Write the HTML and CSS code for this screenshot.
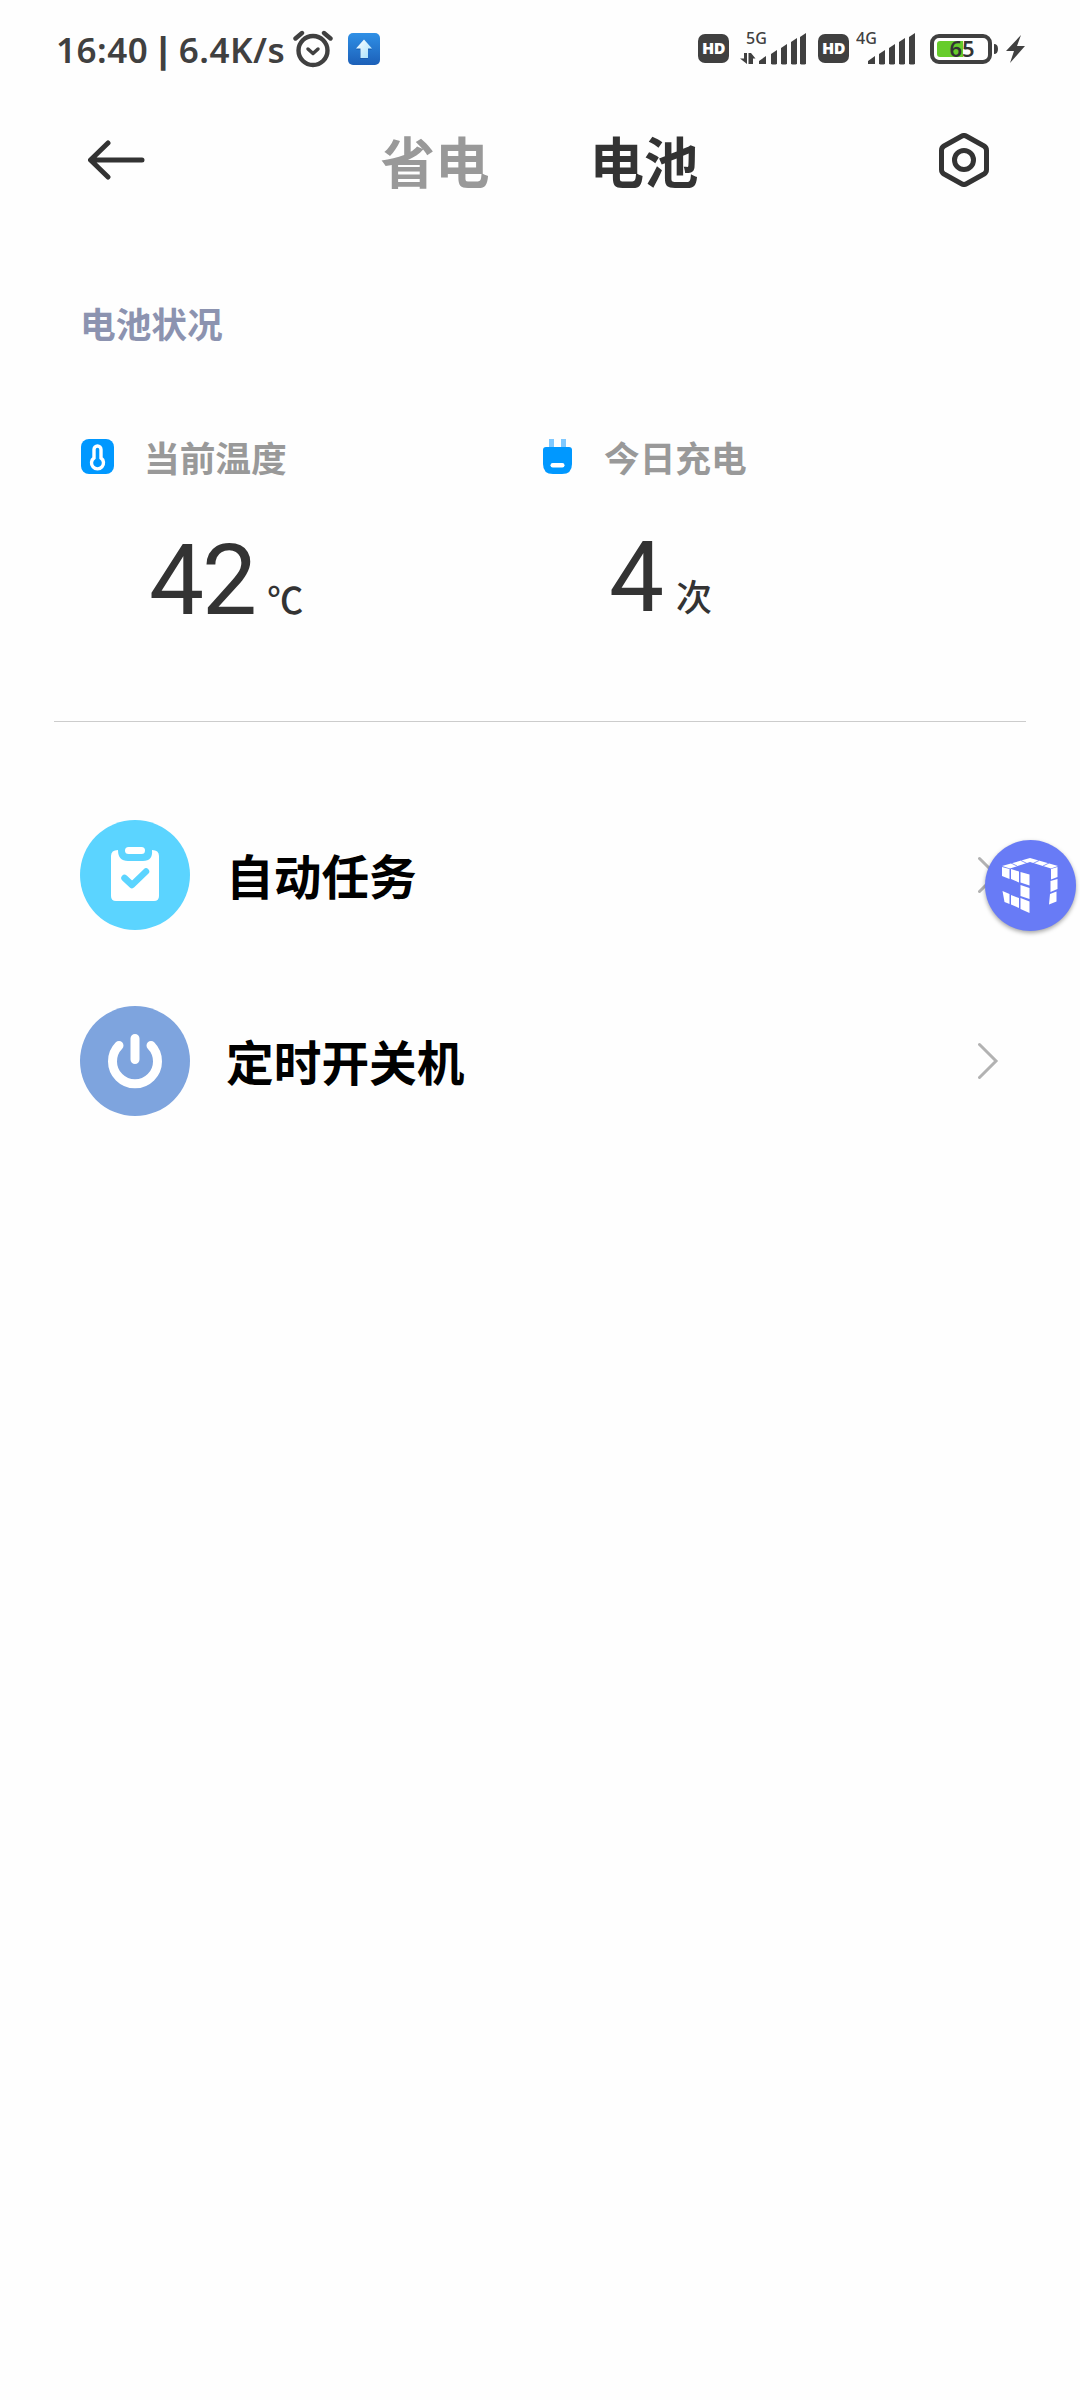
FILE: index.html
```html
<!DOCTYPE html>
<html lang="zh-CN">
<head>
    <meta charset="UTF-8">
    <meta name="viewport" content="width=device-width, initial-scale=1.0">
    <title>电池</title>
    <link rel="stylesheet" href="styles.css">
</head>
<body>
    <div class="status-bar">
        <div class="status-left">
            <span class="status-text">16:40 <b>|</b> 6.4K/s</span>
            <svg class="alarm" width="42" height="38" viewBox="0 0 42 38" fill="none" stroke="#404040" stroke-linecap="round">
                <circle cx="21" cy="20.500" r="14.500" stroke-width="4.400"/>
                <path d="M3.500 8.500L10 3M38.500 8.500L32 3" stroke-width="4.400"/>
                <path d="M16 19l5 4.500 5-4.500" stroke-width="3.500" stroke-linejoin="round"/>
            </svg>
            <svg class="upload" width="32" height="32" viewBox="0 0 32 32">
                <defs>
                    <linearGradient id="up" x1="0" y1="0" x2="0" y2="1">
                        <stop offset="0" stop-color="#2f90e6"/>
                        <stop offset="1" stop-color="#1c60b8"/>
                    </linearGradient>
                    <linearGradient id="arrow" x1="0" y1="0" x2="1" y2="1">
                        <stop offset="0" stop-color="#fff"/>
                        <stop offset="1" stop-color="#a4e0fc"/>
                    </linearGradient>
                </defs>
                <rect width="32" height="32" rx="5" fill="url(#up)"/>
                <path d="M16 8l8 9h-4v9h-8v-9H8z" fill="#174f9c" opacity=".5"/>
                <path d="M16 6.500l8 9h-4v9.500h-7.500v-9.500H8z" fill="url(#arrow)"/>
            </svg>
        </div>
        <div class="status-right">
            <span class="hd">HD</span>
            <svg class="signal" width="68" height="42" viewBox="0 -6 68 42">
                <text x="6" y="13">5G</text>
                <path d="M4 22h3v11L0 27.500h4zM8.500 33V22h2.500v11zM11 33V22l4.500 5.500H13V33z" fill="#404040"/>
                <path d="M19 33v-3l7-5v8zM31 33V23l6-4v14q-3 1-6 0zM41 33V17l6-4v20q-3 1-6 0zM51 33V11l6-4v26q-3 1-6 0zM60 33V6l6-4v31q-3 1-6 0z" fill="#404040"/>
            </svg>
            <span class="hd second">HD</span>
            <svg class="signal wide" width="60" height="42" viewBox="0 -6 60 42">
                <text x="0" y="13">4G</text>
                <path d="M12 33v-3l7-5v8zM23 33V23l6-4v14q-3 1-6 0zM33 33V17l6-4v20q-3 1-6 0zM43 33V11l6-4v26q-3 1-6 0zM53 33V6l6-4v31q-3 1-6 0z" fill="#404040"/>
            </svg>
            <svg class="battery" width="96" height="32" viewBox="0 0 96 32">
                <rect x="2" y="3" width="58" height="26" rx="7" fill="none" stroke="#404040" stroke-width="4"/>
                <path d="M10 8h23v16H10q-3 0-3-3V11q0-3 3-3z" fill="#66cc2b"/>
                <path d="M64 11q4 0 4 5t-4 5z" fill="#404040"/>
                <text x="32" y="24">65</text>
                <path d="M91 2L76 18h8l-4 12 15-17h-8z" fill="#404040"/>
            </svg>
        </div>
    </div>

    <header class="header">
        <svg class="back" width="60" height="42" viewBox="0 0 60 42" fill="none" stroke="#333" stroke-width="5" stroke-linecap="round" stroke-linejoin="round">
            <path d="M20 4L2.500 21 20 38M3 21h51"/>
        </svg>
        <nav class="tabs">
            <span class="tab">省电</span>
            <span class="tab active">电池</span>
        </nav>
        <svg class="settings" width="50" height="54" viewBox="0 0 50 54" fill="none" stroke="#333" stroke-width="5" stroke-linejoin="round">
            <path d="M22.500 3.200q2.500-1.400 5 0L45 13q2.500 1.500 2.500 4.500v19q0 3-2.500 4.500l-17.500 9.800q-2.500 1.400-5 0L5 41q-2.500-1.500-2.500-4.500v-19Q2.500 14.500 5 13z"/>
            <circle cx="25" cy="27" r="9.500"/>
        </svg>
    </header>

    <section class="condition">
        <h2 class="section-title">电池状况</h2>
        <div class="stats">
            <div class="stat">
                <div class="stat-label">
                    <svg width="34" height="36" viewBox="0 0 34 36">
                        <rect x="1" y="0" width="33" height="35" rx="8" fill="#0098ff"/>
                        <path d="M14 19V10.500a3.500 3.500 0 0 1 7 0V19a6 6 0 1 1-7 0z" fill="none" stroke="#fff" stroke-width="3.400"/>
                    </svg>
                    <span class="label-text">当前温度</span>
                </div>
                <div class="stat-value"><span class="number">42</span><span class="unit">℃</span></div>
            </div>
            <div class="stat">
                <div class="stat-label">
                    <svg width="34" height="36" viewBox="0 0 34 36">
                        <path d="M9 0h5v9H9zM21 0h5v9h-5z" fill="#80c9ff"/>
                        <path d="M6 8h23q3 0 3 3v14q0 10-10 10h-9Q3 35 3 25V11q0-3 3-3z" fill="#0098ff"/>
                        <rect x="10.500" y="24" width="14" height="4.500" rx="2.200" fill="#fff"/>
                    </svg>
                    <span class="label-text">今日充电</span>
                </div>
                <div class="stat-value raised"><span class="number">4</span><span class="unit times">次</span></div>
            </div>
        </div>
    </section>

    <ul class="menu">
        <li class="menu-item">
            <svg class="menu-icon" width="110" height="110" viewBox="0 0 110 110">
                <circle cx="55" cy="55" r="55" fill="#5bd4ff"/>
                <path d="M38 30q-7 0-7 6v40q0 5 5 5h38q5 0 5-5V36q0-6-7-6 1 11-9 11H48q-10 0-10-11z" fill="#fff"/>
                <rect x="45" y="27" width="20" height="7" rx="3.500" fill="#fff"/>
                <path d="M44.500 58l7.500 7 14-13.500" fill="none" stroke="#5bd4ff" stroke-width="6.500" stroke-linecap="round" stroke-linejoin="round"/>
            </svg>
            <span class="menu-text">自动任务</span>
            <svg class="chevron" width="22" height="38" viewBox="0 0 22 38" fill="none" stroke="#b2b2b2" stroke-width="3" stroke-linecap="round">
                <path d="M1.500 2.500L18 19 1.500 35.500"/>
            </svg>
        </li>
        <li class="menu-item">
            <svg class="menu-icon" width="110" height="110" viewBox="0 0 110 110">
                <circle cx="55" cy="55" r="55" fill="#7ea4de"/>
                <path d="M39 39.500a22.500 22.500 0 1 0 32 0M55 32.500v21" fill="none" stroke="#fff" stroke-width="9" stroke-linecap="round"/>
            </svg>
            <span class="menu-text">定时开关机</span>
            <svg class="chevron" width="22" height="38" viewBox="0 0 22 38" fill="none" stroke="#b2b2b2" stroke-width="3" stroke-linecap="round">
                <path d="M1.500 2.500L18 19 1.500 35.500"/>
            </svg>
        </li>
    </ul>

    <div class="float-ball">
        <svg width="90" height="90" viewBox="0 0 90 90" fill="#fff">
            <path d="M17 26l28-8 28 8-7 2.500L45 22l-20 6.500z"/>
            <path d="M26 23l6 3M36 20.500l6 3M54 20.500l-6 3M64 23l-6 3" stroke="#687bf6" stroke-width=".8"/>
            <path d="M17 27l7.500 2v10L17 36zM26 29l8 2.500v11L26 39zM35.500 32l9 2.500v11l-9-3z"/>
            <path d="M35.500 45l9 3v11l-9-3zM35.500 58l9 3.500V73l-9-4zM26 55l8 3v10l-8-3.500zM17.500 51l7 3v10l-5-2z"/>
            <path d="M66 29l6.500-2v10L66 39.500zM65.500 41l7-2v10l-7 3zM65 54l6.500-2.500v10L64 64.500z"/>
        </svg>
    </div>
</body>
</html>
```

FILE: styles.css
```css
* {
    box-sizing: border-box;
}
body {
    margin: 0;
    width: 1080px;
    min-height: 2400px;
    background-color: #fefefe;
    color: #333;
    font-family: "Noto Sans", "Noto Sans CJK SC", sans-serif;
}
svg {
    display: block;
    flex-shrink: 0;
}
.status-bar {
    display: flex;
    justify-content: space-between;
    height: 100px;
    padding: 30px 54px 0 56px;
    color: #404040;
}
.status-left,
.status-right {
    display: flex;
    align-items: flex-start;
}
.status-text {
    width: 236px;
    line-height: 39px;
    font-size: 35px;
    font-weight: 600;
    letter-spacing: 0.5px;
    word-spacing: -3.5px;
    white-space: nowrap;
}
.upload {
    margin: 3px 0 0 14px;
}
.hd {
    width: 31px;
    height: 29px;
    margin-top: 4px;
    border-radius: 7px;
    background-color: #404040;
    color: #fff;
    font-family: "Open Sans", sans-serif;
    font-size: 16px;
    font-weight: 800;
    line-height: 29px;
    letter-spacing: -0.5px;
    text-align: center;
}
.second {
    margin-left: 10px;
}
.signal {
    margin: -5px 0 0 11px;
    font-size: 16px;
    font-weight: 500;
    fill: #404040;
}
.wide {
    margin-left: 7px;
}
.battery {
    margin: 3px 0 0 14px;
    font-size: 22px;
    font-weight: 600;
    text-anchor: middle;
    fill: #333;
}
.header {
    display: flex;
    align-items: center;
    justify-content: space-between;
    height: 120px;
    padding: 0 91px 0 88px;
}
.tabs {
    display: flex;
    gap: 100px;
    margin: 0 8px 1px 0;
}
.tab {
    color: #999;
    font-family: "Noto Sans CJK SC", sans-serif;
    font-size: 54.5px;
    font-weight: 700;
    line-height: 80px;
}
.active {
    color: #333;
}
.condition {
    height: 502px;
    margin: 0 54px;
    padding: 78px 26px 0;
    border-bottom: 1px solid #ccc;
}
.section-title {
    margin: 0;
    color: #8c93b0;
    font-family: "Noto Sans CJK SC", sans-serif;
    font-size: 35.7px;
    font-weight: 700;
    line-height: 50px;
}
.stats {
    display: grid;
    grid-template-columns: 460px 1fr;
    margin-top: 84px;
}
.stat-label {
    display: flex;
    align-items: center;
    gap: 30px;
    height: 50px;
    color: #999;
    font-family: "Noto Sans CJK SC", sans-serif;
    font-size: 35.7px;
    font-weight: 700;
    line-height: 50px;
}
.label-text {
    margin-bottom: 1px;
}
.stat-value {
    display: flex;
    align-items: baseline;
    margin-top: 39px;
    padding-left: 69px;
    line-height: 120px;
}
.raised {
    margin-top: 36px;
}
.number {
    font-family: Roboto, sans-serif;
    font-size: 98px;
    letter-spacing: -2px;
}
.unit {
    margin-left: 12px;
    font-family: "Noto Sans CJK SC", sans-serif;
    font-size: 36px;
    font-weight: 500;
    line-height: 50px;
}
.times {
    margin-left: 14px;
}
.menu {
    margin: 0;
    padding: 98px 80px 0;
    list-style: none;
}
.menu-item {
    display: flex;
    align-items: center;
    height: 110px;
    margin-bottom: 76px;
}
.menu-text {
    flex: 1;
    margin: 0 0 2px 36px;
    color: #000;
    font-family: "Noto Sans CJK SC", sans-serif;
    font-size: 47.7px;
    font-weight: 700;
}
/* floating assistant ball, stays above the list */
.float-ball {
    position: absolute;
    top: 840px;
    left: 985px;
    width: 91px;
    height: 91px;
    border-radius: 50%;
    background-color: #687bf6;
    box-shadow: 0 2px 4px rgba(0, 0, 0, 0.35);
}
```
